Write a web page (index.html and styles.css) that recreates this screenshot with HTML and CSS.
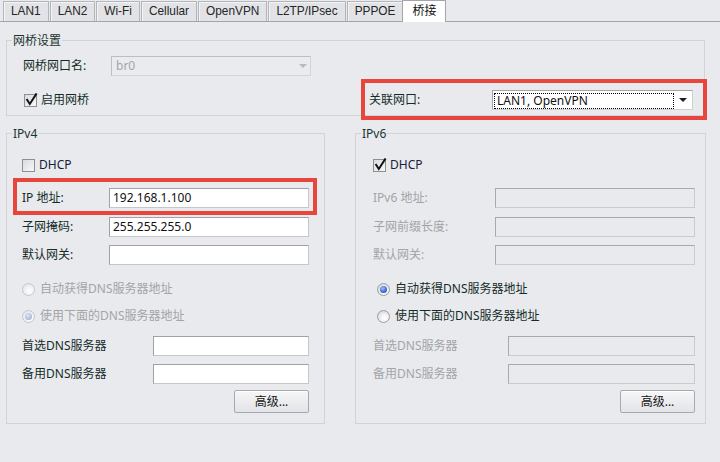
FILE: index.html
```html
<!DOCTYPE html>
<html lang="zh">
<head>
<meta charset="utf-8">
<title>桥接</title>
<link rel="stylesheet" href="styles.css">
</head>
<body>
<div class="tabs">
  <div class="tab">LAN1</div>
  <div class="tab">LAN2</div>
  <div class="tab">Wi-Fi</div>
  <div class="tab">Cellular</div>
  <div class="tab">OpenVPN</div>
  <div class="tab">L2TP/IPsec</div>
  <div class="tab">PPPOE</div>
  <div class="tab active">桥接</div>
</div>

<fieldset class="group bridge">
  <legend>网桥设置</legend>
  <div class="body bridge-body">
    <div class="row">
      <span class="lbl lbl-bridge">网桥网口名:</span>
      <div class="combo disabled"><span class="combo-text">br0</span><span class="arrow"></span></div>
    </div>
    <div class="row row-b">
      <div class="check enable-check"><span class="box"><svg class="tick" viewBox="0 0 14 14" width="14" height="14"><path d="M2.6 6 L5.8 11 L12.6 0.4" fill="none" stroke="#141414" stroke-width="2"/></svg></span><span>启用网桥</span></div>
      <div class="linked hl">
        <span class="lbl lbl-linked">关联网口:</span>
        <div class="combo"><span class="focus">LAN1, OpenVPN</span><span class="arrow"></span></div>
      </div>
    </div>
  </div>
</fieldset>

<div class="cols">
  <fieldset class="group v4">
    <legend>IPv4</legend>
    <div class="body col-body">
      <div class="row r-dhcp">
        <div class="check"><span class="box"></span><span class="latin">DHCP</span></div>
      </div>
      <div class="row r-ip hl">
        <span class="lbl">IP 地址:</span>
        <div class="field">192.168.1.100</div>
      </div>
      <div class="row r-mask">
        <span class="lbl">子网掩码:</span>
        <div class="field">255.255.255.0</div>
      </div>
      <div class="row r-gw">
        <span class="lbl">默认网关:</span>
        <div class="field"></div>
      </div>
      <div class="row r-rad1">
        <div class="radio-row dim"><span class="radio"></span><span>自动获得DNS服务器地址</span></div>
      </div>
      <div class="row r-rad2">
        <div class="radio-row dim"><span class="radio on"></span><span>使用下面的DNS服务器地址</span></div>
      </div>
      <div class="row r-dns1">
        <span class="lbl">首选DNS服务器</span>
        <div class="field dns-v4"></div>
      </div>
      <div class="row r-dns2">
        <span class="lbl">备用DNS服务器</span>
        <div class="field dns-v4"></div>
      </div>
      <div class="row r-btn">
        <div class="btn">高级...</div>
      </div>
    </div>
  </fieldset>

  <fieldset class="group v6">
    <legend>IPv6</legend>
    <div class="body col-body v6-body">
      <div class="row r-dhcp">
        <div class="check"><span class="box"><svg class="tick" viewBox="0 0 14 14" width="14" height="14"><path d="M2.6 6 L5.8 11 L12.6 0.4" fill="none" stroke="#141414" stroke-width="2"/></svg></span><span class="latin">DHCP</span></div>
      </div>
      <div class="row r-ip">
        <span class="lbl dim">IPv6 地址:</span>
        <div class="field off"></div>
      </div>
      <div class="row r-mask">
        <span class="lbl dim">子网前缀长度:</span>
        <div class="field off"></div>
      </div>
      <div class="row r-gw">
        <span class="lbl dim">默认网关:</span>
        <div class="field off"></div>
      </div>
      <div class="row r-rad1">
        <div class="radio-row indent"><span class="radio on"></span><span>自动获得DNS服务器地址</span></div>
      </div>
      <div class="row r-rad2">
        <div class="radio-row indent"><span class="radio"></span><span>使用下面的DNS服务器地址</span></div>
      </div>
      <div class="row r-dns1">
        <span class="lbl dim">首选DNS服务器</span>
        <div class="field off dns-v6"></div>
      </div>
      <div class="row r-dns2">
        <span class="lbl dim">备用DNS服务器</span>
        <div class="field off dns-v6"></div>
      </div>
      <div class="row r-btn">
        <div class="btn">高级...</div>
      </div>
    </div>
  </fieldset>
</div>
</body>
</html>
```

FILE: styles.css
```css
* { box-sizing: border-box; }
html, body { margin: 0; padding: 0; }
body {
  width: 720px;
  height: 462px;
  overflow: hidden;
  background: #e9eaee;
  font: 12px/20px "Noto Sans", "Noto Sans CJK SC", sans-serif;
  color: #142c26;
}

/* ---------- tabs ---------- */
.tabs {
  display: flex;
  align-items: flex-end;
  height: 22px;
  padding-left: 3px;
  border-bottom: 1px solid #a4a5ab;
}
.tab {
  height: 20px;
  padding: 0 7px;
  margin-right: 1px;
  border: 1px solid #b4b5bb;
  border-bottom: none;
  background: #e2e3e7;
  box-shadow: inset 1px 1px 0 #f3f4f6;
  font: 11.85px/19px "Liberation Sans", "Noto Sans CJK SC", sans-serif;
  color: #262626;
  white-space: nowrap;
}
.tab.active {
  position: relative;
  height: 22px;
  margin-bottom: -1px;
  margin-left: -2px;
  padding: 0 9px;
  background: #fff;
  box-shadow: none;
  border-color: #a4a5ab;
  font-size: 12px;
  line-height: 21px;
  color: #111;
}

/* ---------- group boxes ---------- */
.group {
  margin: 0;
  padding: 0;
  min-width: 0;
  border: 1px solid #d2d3d8;
}
.group legend {
  margin-left: 5px;
  padding: 0 1px;
  height: 15px;
  line-height: 15px;
  color: #1a3530;
}
.bridge {
  width: 699px;
  margin: 11px 0 0 6px;
}
.bridge-body { padding: 8px 11px 5px 16px; }

.row {
  position: relative;
  display: flex;
  align-items: center;
  height: 20px;
}
.row-b { margin-top: 14px; }

.lbl { flex: 1; white-space: nowrap; }
.lbl-bridge { flex: 0 0 88px; }
.lbl-linked { flex: 0 0 123px; }
.dim { color: #a3a4a7; }

/* ---------- combo ---------- */
.combo {
  position: relative;
  display: flex;
  align-items: center;
  width: 201px;
  height: 20px;
  border: 1px solid;
  border-color: #a4a5aa #cfd0d4 #cfd0d4 #a4a5aa;
  background: #fff;
  color: #101010;
}
.combo-text { padding-left: 4px; line-height: 18px; }
.combo.disabled {
  width: 200px;
  background: #eaebee;
  border-color: #bdbec3 #d4d5d9 #d4d5d9 #bdbec3;
  color: #a4a4a8;
}
.arrow {
  position: absolute;
  right: 5px;
  top: 7px;
  width: 0;
  height: 0;
  border-left: 4px solid transparent;
  border-right: 4px solid transparent;
  border-top: 4px solid #1c1c24;
}
.combo.disabled .arrow { border-top-color: #b9babe; right: 3px; }
.focus {
  flex: 1;
  margin: 1px 18px 0 1px;
  height: 16px;
  line-height: 14px;
  padding-left: 2px;
  border: 1px dotted #000;
}

.linked {
  position: relative;
  display: flex;
  align-items: center;
  margin-left: auto;
}

/* red annotation frames */
.hl::after {
  content: "";
  position: absolute;
  border: 4px solid #e8453c;
  pointer-events: none;
}
.linked.hl::after { left: -8px; right: -14px; top: -11px; bottom: -10px; }
.r-ip.hl::after { left: -9px; right: -8px; top: -10px; bottom: -7px; }

/* ---------- checkbox & radio ---------- */
.check, .radio-row {
  display: flex;
  align-items: center;
  white-space: nowrap;
}
.box {
  position: relative;
  flex: 0 0 13px;
  width: 13px;
  height: 13px;
  margin-right: 4px;
  border: 1px solid #8e8f93;
  background: linear-gradient(135deg, #dadbde, #f7f7f8);
}
.tick {
  position: absolute;
  left: -1px;
  top: -2px;
}
.enable-check { margin-left: 1px; }
.latin { color: #14213a; }

.radio {
  position: relative;
  flex: 0 0 13px;
  width: 13px;
  height: 13px;
  margin-right: 5px;
  border-radius: 50%;
  border: 1px solid #9c9da2;
  background: radial-gradient(circle at 60% 65%, #ffffff 0, #f1f1f2 40%, #c9cacd 100%);
}
.radio.on::after {
  content: "";
  position: absolute;
  left: 2px;
  top: 2px;
  width: 7px;
  height: 7px;
  border-radius: 50%;
  background: radial-gradient(circle at 40% 35%, #9fc0ff 0, #3d66d0 60%, #2a4aa8 100%);
}
.radio-row.dim .radio {
  border-color: #c6c7cb;
  background: radial-gradient(circle at 60% 65%, #ffffff 0, #f2f2f3 45%, #dcdde0 100%);
}
.radio-row.dim .radio.on::after {
  background: radial-gradient(circle at 40% 35%, #dfe6f5 0, #aab7d4 70%, #97a6c6 100%);
}
.indent { margin-left: 4px; }

/* ---------- fields & buttons ---------- */
.field {
  width: 200px;
  height: 20px;
  padding: 0 3px;
  border: 1px solid;
  border-color: #a1a2a8 #c6c7cc #c6c7cc #a1a2a8;
  background: #fff;
  line-height: 18px;
  color: #101010;
}
.field.off {
  background: #e9eaee;
  border-color: #a8a9ae #cacbd0 #cacbd0 #a8a9ae;
}
.dns-v4 { width: 156px; }
.dns-v6 { width: 187px; }

.btn {
  margin-left: auto;
  width: 75px;
  height: 23px;
  border: 1px solid #a8a9ae;
  border-radius: 2px;
  background: linear-gradient(#f6f6f7, #e3e4e7);
  box-shadow: inset 0 1px 0 #fff;
  text-align: center;
  line-height: 21px;
  color: #141414;
}
.r-btn { height: 23px; }

/* ---------- IPv4 / IPv6 columns ---------- */
.cols {
  display: flex;
  gap: 30px;
  margin: 10px 0 0 6px;
}
.v4 { width: 319px; }
.v6 { width: 351px; }
.col-body { padding: 14px 15px 10px 15px; }
.v6-body { padding: 14px 10px 10px 17px; }

.r-ip { margin-top: 13px; }
.r-mask { margin-top: 9px; }
.r-gw { margin-top: 8px; }
.r-rad1 { margin-top: 14px; }
.r-rad2 { margin-top: 7px; }
.r-dns1 { margin-top: 10px; }
.r-dns2 { margin-top: 8px; }
.r-btn { margin-top: 6px; }
```
